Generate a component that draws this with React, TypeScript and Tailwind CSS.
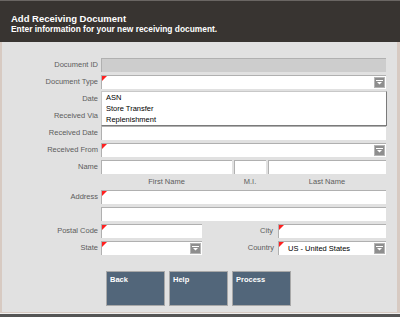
import React from 'react';

const Corner = () => (
  <span className="absolute left-0 top-0 w-0 h-0 border-t-[5px] border-r-[5px] border-t-[#ff2020] border-r-transparent" />
);

const DropBtn = () => (
  <span className="absolute right-[1px] top-[1px] w-[11px] h-[11px] bg-[#8e8e8e] border border-[#b5b5b5] flex items-center justify-center">
    <svg width="7" height="5" viewBox="0 0 7 5">
      <rect x="0" y="0" width="7" height="1" fill="#fff" />
      <polygon points="1,2 6,2 3.5,4.5" fill="#fff" />
    </svg>
  </span>
);

interface FieldProps {
  w?: string;
  req?: boolean;
  drop?: boolean;
  disabled?: boolean;
  value?: string;
}

const Field: React.FC<FieldProps> = ({ w = 'flex-1', req, drop, disabled, value }) => (
  <div
    className={`${w} relative h-[14px] border-t border-l border-[#b0b0b0] ${disabled ? 'bg-[#cdcdcd]' : 'bg-white'} text-[7.5px] leading-[13px] text-black pl-[9px]`}
  >
    {req && <Corner />}
    {value}
    {drop && <DropBtn />}
  </div>
);

const Row: React.FC<{ label: string; children?: React.ReactNode }> = ({ label, children }) => (
  <div className="flex items-center h-[14px]">
    <div className="w-[96px] text-right text-[7.5px] text-[#5c5c5c] leading-none whitespace-nowrap">{label}</div>
    <div className="ml-[3px] w-[285px] flex items-center">{children}</div>
  </div>
);

export default function App() {
  return (
    <div className="w-[400px] h-[318px] bg-white font-['Liberation_Sans',Arial,sans-serif] overflow-hidden">
      <div className="relative h-[313px] bg-[#e1e1e1] border-l-2 border-r-[3px] border-b border-[#d7cac2]">
        {/* Header */}
        <div className="h-[42px] bg-[#383431] border-t border-[#6a6663] -ml-[2px] -mr-[3px] pl-[11px] pt-[12px] text-white font-bold">
          <div className="text-[9.5px] leading-[11px]">Add Receiving Document</div>
          <div className="text-[8.4px] leading-[11px]">Enter information for your new receiving document.</div>
        </div>

        {/* Form */}
        <div className="pt-[16px] flex flex-col gap-[3px]">
          <Row label="Document ID">
            <Field disabled />
          </Row>
          <Row label="Document Type">
            <Field req drop />
          </Row>
          <Row label="Date">
            <Field />
          </Row>
          <Row label="Received Via">
            <Field />
          </Row>
          <Row label="Received Date">
            <Field />
          </Row>
          <Row label="Received From">
            <Field req drop />
          </Row>
          <Row label="Name">
            <div className="flex gap-[2px] w-full">
              <Field w="w-[131px]" />
              <Field w="w-[32px]" />
              <Field w="flex-1" />
            </div>
          </Row>
          <div className="flex h-[10px] items-center text-[7.5px] text-[#5c5c5c] leading-none">
            <div className="w-[99px]" />
            <div className="flex gap-[2px] w-[285px]">
              <div className="w-[131px] text-center">First Name</div>
              <div className="w-[32px] text-center">M.I.</div>
              <div className="flex-1 text-center">Last Name</div>
            </div>
          </div>
          <Row label="Address">
            <Field req />
          </Row>
          <Row label="">
            <Field />
          </Row>
          <Row label="Postal Code">
            <Field w="w-[101px]" req />
            <div className="flex-1 text-right text-[7.5px] text-[#5c5c5c] leading-none pr-[5px]">City</div>
            <Field w="w-[108px]" req />
          </Row>
          <Row label="State">
            <Field w="w-[101px]" req drop />
            <div className="flex-1 text-right text-[7.5px] text-[#5c5c5c] leading-none pr-[4px]">Country</div>
            <Field w="w-[108px]" req drop value="US - United States" />
          </Row>

          {/* Buttons */}
          <div className="flex gap-[4px] ml-[104px] mt-[13px]">
            {['Back', 'Help', 'Process'].map(b => (
              <div
                key={b}
                className="w-[59px] h-[35px] bg-[#52667a] border border-[#a8a8a8] text-white font-bold text-[7.5px] leading-none pl-[3px] pt-[4px]"
              >
                {b}
              </div>
            ))}
          </div>
        </div>

        {/* Open dropdown list */}
        <div className="absolute left-[99px] top-[91px] w-[286px] h-[35px] bg-white border border-t-[#c8c8c8] border-l-[#c8c8c8] border-r-[#7a7a7a] border-b-[#7a7a7a] pl-[4px] text-[7.5px] text-black">
          <div className="leading-[11px]">ASN</div>
          <div className="leading-[11px]">Store Transfer</div>
          <div className="leading-[11px]">Replenishment</div>
        </div>
      </div>
      <div className="h-[1px] bg-[#f0f0f0]" />
      <div className="h-[3px] bg-[#555]" />
    </div>
  );
}
